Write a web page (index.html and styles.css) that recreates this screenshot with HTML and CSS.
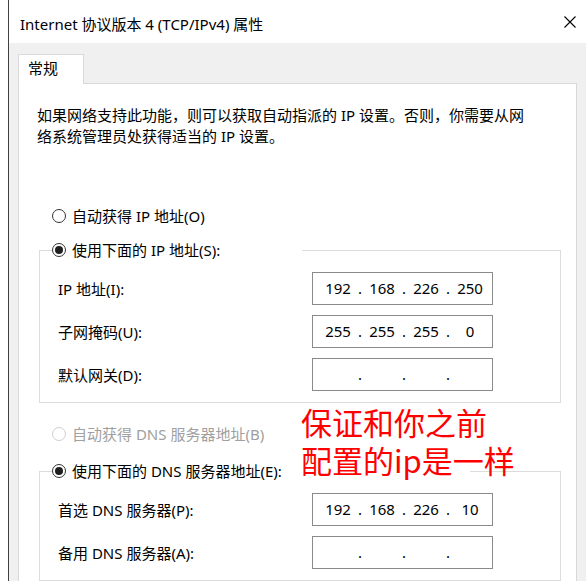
FILE: index.html
```html
<!DOCTYPE html>
<html lang="zh-CN">
<head>
<meta charset="utf-8">
<title>Internet 协议版本 4 (TCP/IPv4) 属性</title>
<link rel="stylesheet" href="styles.css">
</head>
<body>
<div class="window">
  <div class="titlebar">
    <span class="title">Internet 协议版本 4 (TCP/IPv4) 属性</span>
    <svg class="close" width="12" height="12" viewBox="0 0 12 12"><path d="M0.5 0.5L11.5 11.5M11.5 0.5L0.5 11.5" stroke="#000" stroke-width="1.1" fill="none"/></svg>
  </div>
  <div class="client">
    <div class="tabs"><div class="tab">常规</div></div>
    <div class="panel">
      <p class="desc">如果网络支持此功能，则可以获取自动指派的 IP 设置。否则，你需要从网<br>络系统管理员处获得适当的 IP 设置。</p>

      <div class="radio-row first-radio"><span class="radio"></span><span>自动获得 IP 地址(O)</span></div>

      <fieldset class="group group-ip">
        <legend class="legend legend-ip"><span class="radio checked"></span><span>使用下面的 IP 地址(S):</span></legend>
        <div class="row">
          <span class="label">IP 地址(I):</span>
          <div class="ipbox"><span class="oct">192</span><span class="dot">.</span><span class="oct">168</span><span class="dot">.</span><span class="oct">226</span><span class="dot">.</span><span class="oct">250</span></div>
        </div>
        <div class="row">
          <span class="label">子网掩码(U):</span>
          <div class="ipbox"><span class="oct">255</span><span class="dot">.</span><span class="oct">255</span><span class="dot">.</span><span class="oct">255</span><span class="dot">.</span><span class="oct">0</span></div>
        </div>
        <div class="row">
          <span class="label">默认网关(D):</span>
          <div class="ipbox"><span class="oct"></span><span class="dot">.</span><span class="oct"></span><span class="dot">.</span><span class="oct"></span><span class="dot">.</span><span class="oct"></span></div>
        </div>
      </fieldset>

      <div class="radio-row disabled"><span class="radio"></span><span>自动获得 DNS 服务器地址(B)</span></div>

      <fieldset class="group group-dns">
        <legend class="legend legend-dns"><span class="radio checked"></span><span>使用下面的 DNS 服务器地址(E):</span></legend>
        <div class="row">
          <span class="label">首选 DNS 服务器(P):</span>
          <div class="ipbox"><span class="oct">192</span><span class="dot">.</span><span class="oct">168</span><span class="dot">.</span><span class="oct">226</span><span class="dot">.</span><span class="oct">10</span></div>
        </div>
        <div class="row">
          <span class="label">备用 DNS 服务器(A):</span>
          <div class="ipbox"><span class="oct"></span><span class="dot">.</span><span class="oct"></span><span class="dot">.</span><span class="oct"></span><span class="dot">.</span><span class="oct"></span></div>
        </div>
      </fieldset>

      <div class="note">保证和你之前<br>配置的ip是一样</div>
    </div>
  </div>
</div>
</body>
</html>
```
FILE: styles.css
```css
html, body {
  margin: 0;
  padding: 0;
  background: #fff;
  overflow: hidden;
}

.window {
  margin-left: 8px;
  height: 581px;
  border-left: 1px solid #404040;
  overflow: hidden;
  font-family: "Noto Sans", "Noto Sans CJK SC", sans-serif;
  font-size: 15px;
  color: #000;
  display: flex;
  flex-direction: column;
}

.titlebar {
  height: 43px;
  flex: none;
  background: #fff;
  display: flex;
  align-items: flex-start;
  justify-content: space-between;
  padding-left: 11px;
}

.title {
  margin-top: 13px;
  line-height: 22px;
  white-space: nowrap;
}

.close {
  margin-top: 16px;
  margin-right: 10px;
  flex: none;
}

.client {
  flex: 1;
  background: #f0f0f0;
  padding: 11px 9px 0 9px;
}

.tabs {
  display: flex;
}

.tab {
  position: relative;
  z-index: 1;
  width: 55px;
  height: 26px;
  padding: 0 0 3px 9px;
  line-height: 26px;
  background: #fff;
  border: 1px solid #d9d9d9;
  border-bottom: none;
  margin-bottom: -1px;
}

.panel {
  position: relative;
  background: #fff;
  border: 1px solid #d9d9d9;
  padding-bottom: 60px;
}

.desc {
  margin: 21px 0 0 18px;
  line-height: 21px;
  white-space: nowrap;
}

.radio-row {
  display: flex;
  width: fit-content;
  align-items: center;
  gap: 6px;
  height: 22px;
  line-height: 22px;
  margin-left: 33px;
  white-space: nowrap;
}

.first-radio {
  margin-top: 58px;
}

.radio-row.disabled {
  margin-top: 20px;
  color: #a0a0a0;
}

.radio {
  flex: none;
  width: 14px;
  height: 14px;
  box-sizing: border-box;
  border: 1px solid #333;
  border-radius: 50%;
  background: #fff;
  display: flex;
  align-items: center;
  justify-content: center;
}

.radio.checked::after {
  content: "";
  width: 8px;
  height: 8px;
  border-radius: 50%;
  background: #1f1f1f;
}

.disabled .radio {
  border-color: #cfcfcf;
}

.group {
  margin: 12px 15px 0 20px;
  padding: 0 0 11px 12px;
  border: 1px solid #dcdcdc;
  min-inline-size: 0;
}

.group-dns {
  margin-top: 15px;
}

.legend {
  display: flex;
  align-items: center;
  gap: 6px;
  height: 22px;
  line-height: 22px;
  padding: 0;
  white-space: nowrap;
}

.legend-ip {
  width: 250px;
}

.legend-dns {
  width: 418px;
}

.row {
  display: flex;
  align-items: center;
  margin-top: 10px;
}

.group > .row:first-of-type {
  margin-top: 11px;
}

.label {
  width: 254px;
  margin-left: 6px;
  white-space: nowrap;
}

.ipbox {
  width: 181px;
  height: 33px;
  box-sizing: border-box;
  border: 1px solid #8a8a8a;
  display: flex;
  align-items: center;
  padding: 0 0 2px 7px;
  background: #fff;
}

.oct {
  width: 36px;
  text-align: center;
}

.dot {
  width: 8px;
  text-align: center;
}

.note {
  position: absolute;
  left: 282px;
  top: 319px;
  font-family: "Noto Sans CJK SC", sans-serif;
  font-size: 31px;
  line-height: 38px;
  color: #ff0000;
  white-space: nowrap;
}
```
